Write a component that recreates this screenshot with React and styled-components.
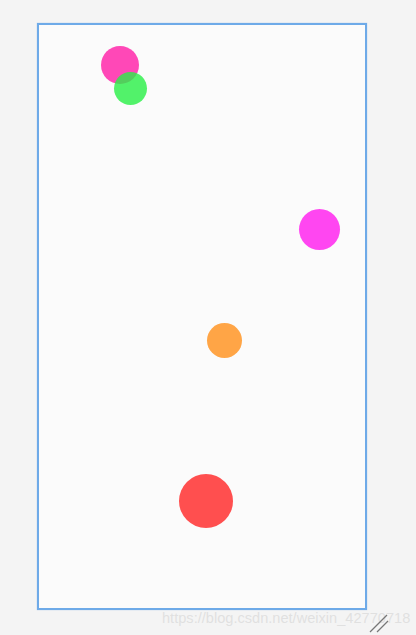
import React from 'react';
import styled, { createGlobalStyle } from 'styled-components';

const GlobalStyle = createGlobalStyle`
  html, body {
    margin: 0;
    padding: 0;
    background: #f4f4f4;
    font-family: "Liberation Sans", Arial, sans-serif;
  }
`;

const Page = styled.div`
  position: relative;
  width: 416px;
  height: 635px;
  padding: 23px 0 0 37px;
  box-sizing: border-box;
  overflow: hidden;
`;

const Stage = styled.div`
  position: relative;
  width: 330px;
  height: 587px;
  box-sizing: border-box;
  background: #fbfbfb;
  border: 2px solid #6eaae8;
  box-shadow: 0 0 1px rgba(74, 144, 226, 0.5);
`;

const Ball = styled.div`
  position: absolute;
  border-radius: 50%;
  background: ${(p) => p.color};
  width: ${(p) => p.r * 2}px;
  height: ${(p) => p.r * 2}px;
  left: ${(p) => p.x - p.r - 39}px;
  top: ${(p) => p.y - p.r - 25}px;
`;

const Watermark = styled.div`
  position: absolute;
  left: 162px;
  top: 610px;
  font-size: 14.6px;
  color: rgba(222, 222, 222, 0.9);
  white-space: nowrap;
`;

const Grip = styled.svg`
  position: absolute;
  left: 368px;
  top: 612px;
`;

const balls = [
  { x: 119.5, y: 65, r: 19, color: 'rgba(255, 40, 170, 0.85)' },
  { x: 130, y: 88, r: 16.5, color: 'rgba(40, 240, 70, 0.8)' },
  { x: 319.5, y: 229.5, r: 20.5, color: 'rgba(255, 60, 240, 0.95)' },
  { x: 224, y: 340.5, r: 17.5, color: 'rgba(255, 155, 50, 0.9)' },
  { x: 205.5, y: 501, r: 27, color: 'rgba(255, 70, 70, 0.95)' },
];

export default function App() {
  return (
    <>
      <GlobalStyle />
      <Page>
        <Stage>
          {balls.map((b, i) => (
            <Ball key={i} {...b} />
          ))}
        </Stage>
        <Watermark>https://blog.csdn.net/weixin_42770718</Watermark>
        <Grip width="22" height="22" viewBox="0 0 22 22">
          <line x1="2" y1="20" x2="19" y2="3" stroke="#777" strokeWidth="1.2" />
          <line x1="9" y1="20" x2="20" y2="9" stroke="#777" strokeWidth="1.2" />
        </Grip>
      </Page>
    </>
  );
}
